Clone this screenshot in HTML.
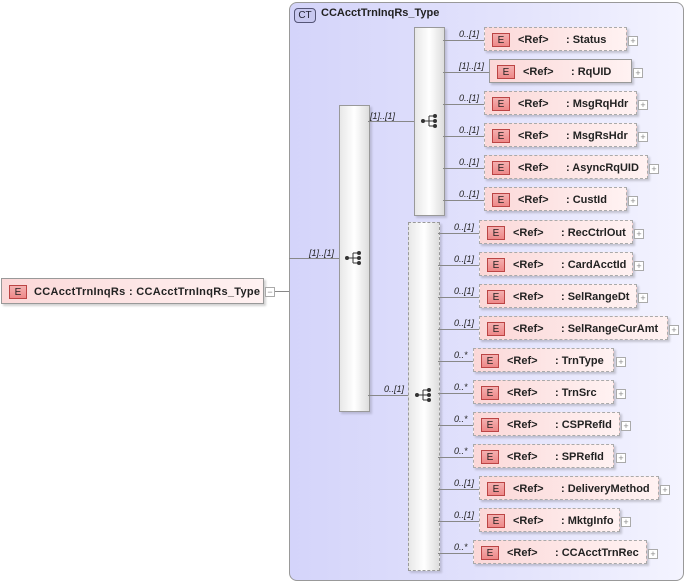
<!DOCTYPE html><html><head><style>
body{margin:0;width:687px;height:583px;position:relative;background:#fff;font-family:"Liberation Sans",sans-serif;overflow:hidden}
.a{position:absolute}
.ct{left:289px;top:2px;width:393px;height:577px;border:1px solid #999;border-radius:8px;background:linear-gradient(90deg,#d4d4fa,#e4e4fc 60%,#f4f4ff)}
.el{position:absolute;height:24px;border:1px dashed #aaa;background:linear-gradient(90deg,#fbd8d8,#fff2f2);box-shadow:2px 2px 2px rgba(0,0,0,.18);font-size:11px;font-weight:bold;color:#222;line-height:24px;box-sizing:border-box}
.el.s{border:1px solid #999}
.e{position:absolute;left:7px;top:5px;width:18px;height:14px;border:1px solid #b44;background:linear-gradient(#f4b0b0,#e88);font-size:10px;line-height:14px;text-align:center;font-weight:normal;box-sizing:border-box}
.r{position:absolute;left:33px}
.n{position:absolute}
.p{position:absolute;width:8px;height:8px;border:1px solid #aaa;background:#fff;font-size:9px;line-height:8px;text-align:center;color:#888;font-weight:normal}
.h{position:absolute;height:1px;background:#888}
.l{position:absolute;font-size:9px;font-style:italic;color:#222}
.seq{position:absolute;border:1px solid #999;background:linear-gradient(90deg,#e8e8e8,#fff 50%,#ddd);box-shadow:2px 2px 2px rgba(0,0,0,.15)}
</style></head><body>
<div class="a ct"></div>
<div class="a" style="left:294px;top:8px;width:20px;height:13px;border:1px solid #557;border-radius:4px;background:#c8c8f0;font-size:10px;line-height:13px;text-align:center;color:#223">CT</div>
<div class="a" style="left:321px;top:7px;font-size:11px;font-weight:bold;color:#222">CCAcctTrnInqRs_Type</div>

<div class="el s" style="left:1px;top:278px;width:263px;height:26px;line-height:26px"><div class="e" style="top:6px">E</div><span class="n" style="left:32px;letter-spacing:0.3px">CCAcctTrnInqRs : CCAcctTrnInqRs_Type</span></div>
<div class="p" style="left:265px;top:287px">−</div>
<div class="h" style="left:275px;top:291px;width:14px"></div>
<div class="h" style="left:289px;top:258px;width:50px"></div>
<div class="l" style="left:309px;top:248px">[1]..[1]</div>

<div class="seq" style="left:339px;top:105px;width:29px;height:305px"></div>
<svg class="a" style="left:344px;top:250px" width="20" height="16"><circle cx="3" cy="8" r="2" fill="#333"/><path d="M3 8H9M9 3V13M9 3H14M9 8H14M9 13H14" stroke="#333" fill="none"/><circle cx="15" cy="3" r="2" fill="#333"/><circle cx="15" cy="8" r="2" fill="#333"/><circle cx="15" cy="13" r="2" fill="#333"/></svg>
<div class="h" style="left:368px;top:121px;width:46px"></div>
<div class="l" style="left:370px;top:111px">[1]..[1]</div>
<div class="h" style="left:368px;top:395px;width:40px"></div>
<div class="l" style="left:384px;top:384px">0..[1]</div>

<div class="seq" style="left:414px;top:27px;width:29px;height:187px"></div>
<svg class="a" style="left:420px;top:113px" width="20" height="16"><circle cx="3" cy="8" r="2" fill="#333"/><path d="M3 8H9M9 3V13M9 3H14M9 8H14M9 13H14" stroke="#333" fill="none"/><circle cx="15" cy="3" r="2" fill="#333"/><circle cx="15" cy="8" r="2" fill="#333"/><circle cx="15" cy="13" r="2" fill="#333"/></svg>
<div class="seq" style="left:408px;top:222px;width:30px;height:347px;border-style:dashed"></div>
<svg class="a" style="left:414px;top:387px" width="20" height="16"><circle cx="3" cy="8" r="2" fill="#333"/><path d="M3 8H9M9 3V13M9 3H14M9 8H14M9 13H14" stroke="#333" fill="none"/><circle cx="15" cy="3" r="2" fill="#333"/><circle cx="15" cy="8" r="2" fill="#333"/><circle cx="15" cy="13" r="2" fill="#333"/></svg>

<div class="h" style="left:443px;top:40px;width:41px"></div><div class="l" style="left:459px;top:29px">0..[1]</div>
<div class="el" style="left:484px;top:27px;width:143px"><div class="e">E</div><span class="r">&lt;Ref&gt;</span><span class="n" style="left:81px">: Status</span></div><div class="p" style="left:628px;top:36px">+</div>

<div class="h" style="left:443px;top:72px;width:46px"></div><div class="l" style="left:459px;top:61px">[1]..[1]</div>
<div class="el s" style="left:489px;top:59px;width:143px"><div class="e">E</div><span class="r">&lt;Ref&gt;</span><span class="n" style="left:81px">: RqUID</span></div><div class="p" style="left:633px;top:68px">+</div>

<div class="h" style="left:443px;top:104px;width:41px"></div><div class="l" style="left:459px;top:93px">0..[1]</div>
<div class="el" style="left:484px;top:91px;width:153px"><div class="e">E</div><span class="r">&lt;Ref&gt;</span><span class="n" style="left:81px">: MsgRqHdr</span></div><div class="p" style="left:638px;top:100px">+</div>

<div class="h" style="left:443px;top:136px;width:41px"></div><div class="l" style="left:459px;top:125px">0..[1]</div>
<div class="el" style="left:484px;top:123px;width:153px"><div class="e">E</div><span class="r">&lt;Ref&gt;</span><span class="n" style="left:81px">: MsgRsHdr</span></div><div class="p" style="left:638px;top:132px">+</div>

<div class="h" style="left:443px;top:168px;width:41px"></div><div class="l" style="left:459px;top:157px">0..[1]</div>
<div class="el" style="left:484px;top:155px;width:164px"><div class="e">E</div><span class="r">&lt;Ref&gt;</span><span class="n" style="left:81px">: AsyncRqUID</span></div><div class="p" style="left:649px;top:164px">+</div>

<div class="h" style="left:443px;top:200px;width:41px"></div><div class="l" style="left:459px;top:189px">0..[1]</div>
<div class="el" style="left:484px;top:187px;width:143px"><div class="e">E</div><span class="r">&lt;Ref&gt;</span><span class="n" style="left:81px">: CustId</span></div><div class="p" style="left:628px;top:196px">+</div>

<div class="h" style="left:438px;top:233px;width:41px"></div><div class="l" style="left:454px;top:222px">0..[1]</div>
<div class="el" style="left:479px;top:220px;width:154px"><div class="e">E</div><span class="r">&lt;Ref&gt;</span><span class="n" style="left:81px">: RecCtrlOut</span></div><div class="p" style="left:634px;top:229px">+</div>

<div class="h" style="left:438px;top:265px;width:41px"></div><div class="l" style="left:454px;top:254px">0..[1]</div>
<div class="el" style="left:479px;top:252px;width:154px"><div class="e">E</div><span class="r">&lt;Ref&gt;</span><span class="n" style="left:81px">: CardAcctId</span></div><div class="p" style="left:634px;top:261px">+</div>

<div class="h" style="left:438px;top:297px;width:41px"></div><div class="l" style="left:454px;top:286px">0..[1]</div>
<div class="el" style="left:479px;top:284px;width:158px"><div class="e">E</div><span class="r">&lt;Ref&gt;</span><span class="n" style="left:81px">: SelRangeDt</span></div><div class="p" style="left:638px;top:293px">+</div>

<div class="h" style="left:438px;top:329px;width:41px"></div><div class="l" style="left:454px;top:318px">0..[1]</div>
<div class="el" style="left:479px;top:316px;width:189px"><div class="e">E</div><span class="r">&lt;Ref&gt;</span><span class="n" style="left:81px">: SelRangeCurAmt</span></div><div class="p" style="left:669px;top:325px">+</div>

<div class="h" style="left:438px;top:361px;width:35px"></div><div class="l" style="left:454px;top:350px">0..*</div>
<div class="el" style="left:473px;top:348px;width:141px"><div class="e">E</div><span class="r">&lt;Ref&gt;</span><span class="n" style="left:81px">: TrnType</span></div><div class="p" style="left:616px;top:357px">+</div>

<div class="h" style="left:438px;top:393px;width:35px"></div><div class="l" style="left:454px;top:382px">0..*</div>
<div class="el" style="left:473px;top:380px;width:141px"><div class="e">E</div><span class="r">&lt;Ref&gt;</span><span class="n" style="left:81px">: TrnSrc</span></div><div class="p" style="left:616px;top:389px">+</div>

<div class="h" style="left:438px;top:425px;width:35px"></div><div class="l" style="left:454px;top:414px">0..*</div>
<div class="el" style="left:473px;top:412px;width:147px"><div class="e">E</div><span class="r">&lt;Ref&gt;</span><span class="n" style="left:81px">: CSPRefId</span></div><div class="p" style="left:621px;top:421px">+</div>

<div class="h" style="left:438px;top:457px;width:35px"></div><div class="l" style="left:454px;top:446px">0..*</div>
<div class="el" style="left:473px;top:444px;width:141px"><div class="e">E</div><span class="r">&lt;Ref&gt;</span><span class="n" style="left:81px">: SPRefId</span></div><div class="p" style="left:616px;top:453px">+</div>

<div class="h" style="left:438px;top:489px;width:41px"></div><div class="l" style="left:454px;top:478px">0..[1]</div>
<div class="el" style="left:479px;top:476px;width:180px"><div class="e">E</div><span class="r">&lt;Ref&gt;</span><span class="n" style="left:81px">: DeliveryMethod</span></div><div class="p" style="left:660px;top:485px">+</div>

<div class="h" style="left:438px;top:521px;width:41px"></div><div class="l" style="left:454px;top:510px">0..[1]</div>
<div class="el" style="left:479px;top:508px;width:141px"><div class="e">E</div><span class="r">&lt;Ref&gt;</span><span class="n" style="left:81px">: MktgInfo</span></div><div class="p" style="left:621px;top:517px">+</div>

<div class="h" style="left:438px;top:553px;width:35px"></div><div class="l" style="left:454px;top:542px">0..*</div>
<div class="el" style="left:473px;top:540px;width:174px"><div class="e">E</div><span class="r">&lt;Ref&gt;</span><span class="n" style="left:81px">: CCAcctTrnRec</span></div><div class="p" style="left:648px;top:549px">+</div>
</body></html>
